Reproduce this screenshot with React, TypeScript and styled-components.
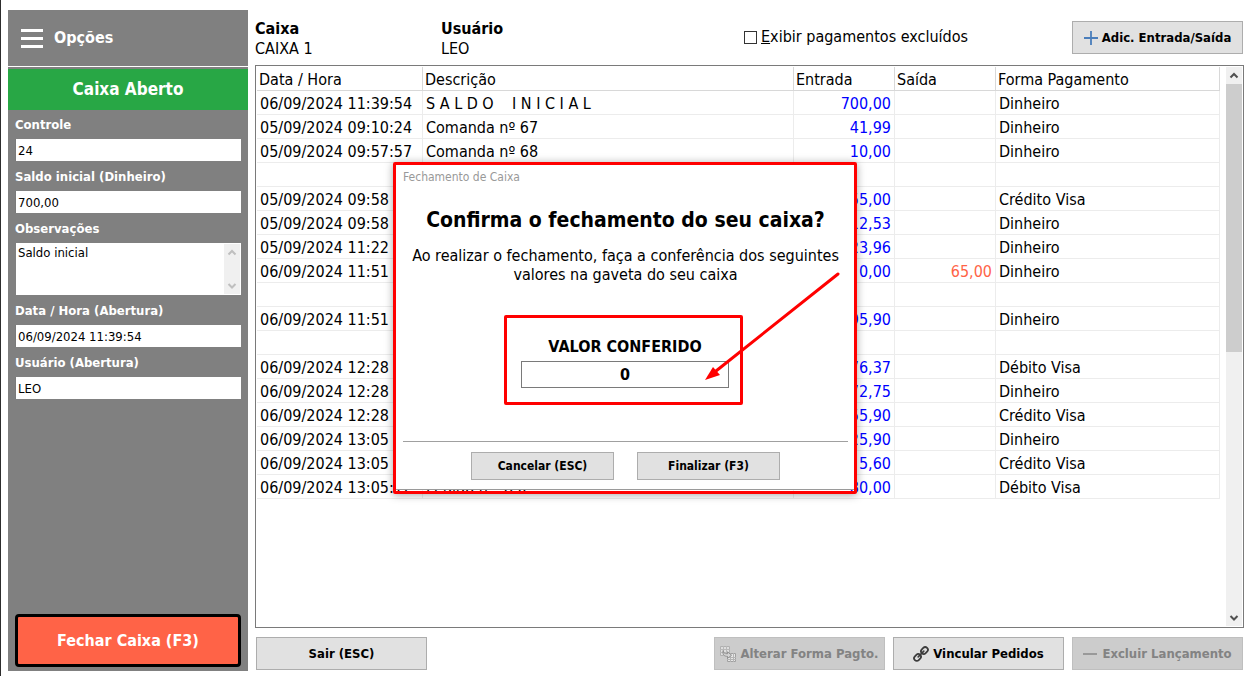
import React from "react";
import styled, { createGlobalStyle } from "styled-components";

const GlobalStyle = createGlobalStyle`
  *, *::before, *::after { box-sizing: border-box; }
  body {
    margin: 0;
    background: #fff;
    color: #000;
    font-family: "DejaVu Sans Condensed", "Noto Sans", sans-serif;
    font-size: 16px;
    line-height: 20px;
  }
  button, input, textarea { font: inherit; color: inherit; margin: 0; }
`;

const Window = styled.div`
  position: relative;
  display: flex;
  gap: 7px;
  min-height: 100vh;
  padding: 10px 5px 5px 7px;
  border-left: 1px solid #2d2d2d;
`;

/* ---------- sidebar ---------- */

const Sidebar = styled.aside`
  display: flex;
  flex-direction: column;
  flex: 0 0 240px;
  background: #808080;
  color: #fff;
`;

const MenuButton = styled.button`
  display: flex;
  align-items: center;
  gap: 11px;
  height: 57px;
  padding: 0 13px;
  border: 0;
  border-bottom: 1px solid #fff;
  background: none;
  font-size: 16px;
  font-weight: bold;
`;

const Status = styled.div`
  margin-top: 2px;
  padding: 10px 0;
  background: #28a745;
  font-size: 17px;
  font-weight: bold;
  line-height: 21px;
  text-align: center;
`;

const Fields = styled.div`
  display: flex;
  flex-direction: column;
  padding: 5px 7px 0;
`;

const Field = styled.label`
  display: flex;
  flex-direction: column;
  gap: 4px;
  margin-bottom: 6px;
  font-size: 13px;
  font-weight: bold;
  line-height: 20px;
`;

const TextInput = styled.input`
  height: 22px;
  width: 100%;
  padding: 0 2px;
  border: 0;
  border-left: 1px solid #7a7a7a;
  background: #fff;
  color: #000;
  font-size: 13px;
  font-weight: normal;
`;

const NoteBox = styled.span`
  display: flex;
  height: 52px;
  padding: 1px;
  margin-left: 1px;
  background: #fff;
`;

const NoteText = styled.textarea`
  flex: 1;
  min-width: 0;
  padding: 1px;
  border: 0;
  resize: none;
  overflow: hidden;
  color: #000;
  font-size: 13px;
  font-weight: normal;
  line-height: 16px;
`;

const CloseButton = styled.button`
  height: 53px;
  margin: auto 7px 4px;
  border: 3px solid #000;
  border-radius: 4px;
  background: #ff6347;
  font-size: 16px;
  font-weight: bold;
`;

/* ---------- scroll bars ---------- */

const Scroll = styled.span<{ $active?: boolean }>`
  display: flex;
  flex-direction: column;
  align-items: center;
  justify-content: space-between;
  flex: 0 0 16px;
  background: #f0f0f0;
  color: ${(p) => (p.$active ? "#505050" : "#bfbfbf")};
`;

const ScrollArrow = styled.svg`
  width: 16px;
  height: 17px;
  flex: none;
`;

const ScrollTrack = styled.span`
  flex: 1;
  align-self: stretch;
`;

const ScrollThumb = styled.span`
  display: block;
  height: 51%;
  background: #cdcdcd;
`;

/* ---------- main area ---------- */

const Main = styled.main`
  display: flex;
  flex-direction: column;
  flex: 1;
  min-width: 0;
`;

const TopBar = styled.header`
  display: flex;
  align-items: flex-start;
  height: 55px;
  padding-top: 9px;
`;

const Info = styled.div`
  flex: 0 0 186px;
`;

const InfoTitle = styled.div`
  font-weight: bold;
`;

const CheckLabel = styled.label`
  display: flex;
  align-items: center;
  gap: 4px;
  margin: 8px 104px 0 auto;
`;

const CheckBox = styled.input`
  appearance: none;
  width: 13px;
  height: 13px;
  border: 1px solid #333;
  background: #fff;
`;

const Button = styled.button`
  display: inline-flex;
  align-items: center;
  justify-content: center;
  gap: 4px;
  flex: none;
  width: 171px;
  height: 33px;
  padding: 0;
  border: 1px solid #adadad;
  background: #e1e1e1;
  font-size: 13px;
  font-weight: bold;
  line-height: 16px;
  white-space: nowrap;
  &:disabled {
    border-color: #bfbfbf;
    background: #ccc;
    color: #838383;
  }
`;

const DialogButton = styled(Button)`
  width: 143px;
  height: 28px;
  font-size: 12px;
`;

const TopButtonSlot = styled.div`
  display: flex;
  padding: 2px 1px 0 0;
`;

const Grid = styled.section`
  display: flex;
  flex: 1;
  align-items: stretch;
  padding: 1px;
  border: 1px solid #7a7a7a;
`;

const GridBody = styled.div`
  flex: 1;
  min-width: 0;
  margin-right: 6px;
`;

const Table = styled.table`
  width: 100%;
  table-layout: fixed;
  border-collapse: separate;
  border-spacing: 0;
`;

const Column = styled.col<{ $width: number }>`
  width: ${(p) => p.$width}px;
`;

const HeadCell = styled.th`
  height: 24px;
  padding: 2px 2px 0;
  border-right: 1px solid #d8d8d8;
  border-bottom: 1px solid #d8d8d8;
  font-weight: normal;
  text-align: left;
  white-space: nowrap;
`;

const Cell = styled.td<{ $tone?: "in" | "out" }>`
  height: 24px;
  padding: 2px 3px 0;
  border-right: 1px solid #ececec;
  border-bottom: 1px solid #ececec;
  overflow: hidden;
  white-space: pre;
  text-align: ${(p) => (p.$tone ? "right" : "left")};
  color: ${(p) => (p.$tone === "in" ? "#0000ff" : p.$tone === "out" ? "#ff6347" : "#000")};
`;

const Footer = styled.footer`
  display: flex;
  gap: 8px;
  padding: 9px 1px 1px;
`;

const Spacer = styled.span`
  flex: 1;
`;

/* ---------- dialog ---------- */

const Overlay = styled.div`
  position: absolute;
  inset: 0;
  display: flex;
  align-items: center;
  justify-content: center;
  padding-bottom: 20px;
`;

const DialogFrame = styled.div`
  position: relative;
  width: 464px;
  padding-bottom: 1px;
  border: 3px solid #ff0000;
  border-radius: 2px;
  box-shadow: 0 1px 9px rgba(0, 0, 0, 0.35);
`;

const DialogPanel = styled.div`
  display: flex;
  flex-direction: column;
  align-items: center;
  height: 325px;
  padding: 4px 6px 0 7px;
  border-bottom: 1px solid #9a9a9a;
  background: #fff;
`;

const DialogCaption = styled.div`
  align-self: flex-start;
  color: #999;
  font-size: 12px;
  line-height: 16px;
`;

const DialogTitle = styled.h1`
  margin: 21px 0 0;
  font-size: 21px;
  line-height: 28px;
  white-space: nowrap;
`;

const DialogText = styled.p`
  margin: 12px 0 0;
  line-height: 19px;
  text-align: center;
  white-space: nowrap;
`;

const ValueBox = styled.label`
  display: flex;
  flex-direction: column;
  align-items: center;
  gap: 4px;
  width: 239px;
  height: 90px;
  margin: 31px 4px 0 0;
  padding: 19px 11px 0 14px;
  border: 3px solid #ff0000;
  border-radius: 2px;
  font-weight: bold;
`;

const ValueInput = styled.input`
  width: 100%;
  height: 27px;
  border: 1px solid #7a7a7a;
  background: #fff;
  text-align: center;
`;

const DialogActions = styled.div`
  display: flex;
  align-self: stretch;
  justify-content: center;
  gap: 23px;
  margin-top: 36px;
  padding-top: 10px;
  border-top: 1px solid #a0a0a0;
`;

const Pointer = styled.svg`
  position: absolute;
  left: 306px;
  top: 106px;
  width: 140px;
  height: 112px;
  pointer-events: none;
`;

/* ---------- icons ---------- */

const Arrow = ({ down }: { down?: boolean }) => (
  <ScrollArrow viewBox="0 0 16 17" aria-hidden="true">
    <path
      d={down ? "M4.5 7 L8 10.5 L11.5 7" : "M4.5 10.5 L8 7 L11.5 10.5"}
      fill="none"
      stroke="currentColor"
      strokeWidth="2"
    />
  </ScrollArrow>
);

const MenuIcon = () => (
  <svg width="22" height="20" viewBox="0 0 22 20" fill="#fff" aria-hidden="true">
    <rect y="1" width="22" height="3" />
    <rect y="9" width="22" height="3" />
    <rect y="17" width="22" height="3" />
  </svg>
);

const PlusIcon = () => (
  <svg width="14" height="16" viewBox="0 0 14 16" aria-hidden="true">
    <path d="M7 1V15M0 8H14" stroke="#4a7ebb" strokeWidth="1.8" />
  </svg>
);

const MinusIcon = () => (
  <svg width="15" height="16" viewBox="0 0 15 16" aria-hidden="true">
    <path d="M0 8H14" stroke="#999" strokeWidth="2" />
  </svg>
);

const LinkIcon = () => (
  <svg width="16" height="16" viewBox="0 0 16 16" fill="none" stroke="#3c3c3c" aria-hidden="true">
    <g transform="rotate(-45 8 8)">
      <rect x="-0.6" y="5.3" width="7.4" height="5.4" rx="2.7" strokeWidth="1.8" />
      <rect x="9.2" y="5.3" width="7.4" height="5.4" rx="2.7" strokeWidth="1.8" />
      <path d="M4 8H12" strokeWidth="1.6" strokeLinecap="round" />
    </g>
  </svg>
);

const ConvertIcon = () => (
  <svg width="16" height="16" viewBox="0 0 16 16" aria-hidden="true">
    <path d="M.5 .5H9.5V9.5H.5Z" fill="#dedede" stroke="#b0b0b0" />
    <path d="M0 3.5H10M0 6.5H10M3.5 0V10M6.5 0V10" stroke="#b8b8b8" />
    <path d="M7.5 7.5H15.5V15.5H7.5Z" fill="#e6e6e6" stroke="#a0a0a0" />
    <path d="M7 11.5H16M7 13.5H16M10.5 7V16M13.5 7V16" stroke="#b4b4b4" />
    <path
      d="M3.2 4.5C3.2 7 4.5 7.8 7.5 7.8V5.8L11.6 9.2L7.5 12.4V10.4C4 10.4 2.2 8.4 3.2 4.5Z"
      fill="#d4d4d4"
      stroke="#8c8c8c"
      strokeWidth="0.9"
    />
  </svg>
);

/* ---------- data ---------- */

type Entry = [date: string, description: string, credit: string, debit: string, method: string];

const entries: Entry[] = [
  ["06/09/2024 11:39:54", "S A L D O    I N I C I A L", "700,00", "", "Dinheiro"],
  ["05/09/2024 09:10:24", "Comanda nº 67", "41,99", "", "Dinheiro"],
  ["05/09/2024 09:57:57", "Comanda nº 68", "10,00", "", "Dinheiro"],
  ["", "", "", "", ""],
  ["05/09/2024 09:58", "", "55,00", "", "Crédito Visa"],
  ["05/09/2024 09:58", "", "12,53", "", "Dinheiro"],
  ["05/09/2024 11:22", "", "23,96", "", "Dinheiro"],
  ["06/09/2024 11:51", "", "0,00", "65,00", "Dinheiro"],
  ["", "", "", "", ""],
  ["06/09/2024 11:51", "", "95,90", "", "Dinheiro"],
  ["", "", "", "", ""],
  ["06/09/2024 12:28", "", "76,37", "", "Débito Visa"],
  ["06/09/2024 12:28", "", "72,75", "", "Dinheiro"],
  ["06/09/2024 12:28", "", "55,90", "", "Crédito Visa"],
  ["06/09/2024 13:05", "", "25,90", "", "Dinheiro"],
  ["06/09/2024 13:05", "", "5,60", "", "Crédito Visa"],
  ["06/09/2024 13:05:12", "Pedido nº 920", "80,00", "", "Débito Visa"],
];

export default function App() {
  return (
    <>
      <GlobalStyle />
      <Window>
        <Sidebar>
          <MenuButton>
            <MenuIcon />
            Opções
          </MenuButton>
          <Status>Caixa Aberto</Status>
          <Fields>
            <Field>
              Controle
              <TextInput defaultValue="24" />
            </Field>
            <Field>
              Saldo inicial (Dinheiro)
              <TextInput defaultValue="700,00" />
            </Field>
            <Field>
              Observações
              <NoteBox>
                <NoteText defaultValue="Saldo inicial" />
                <Scroll>
                  <Arrow />
                  <Arrow down />
                </Scroll>
              </NoteBox>
            </Field>
            <Field>
              Data / Hora (Abertura)
              <TextInput defaultValue="06/09/2024 11:39:54" />
            </Field>
            <Field>
              Usuário (Abertura)
              <TextInput defaultValue="LEO" />
            </Field>
          </Fields>
          <CloseButton>Fechar Caixa (F3)</CloseButton>
        </Sidebar>

        <Main>
          <TopBar>
            <Info>
              <InfoTitle>Caixa</InfoTitle>
              CAIXA 1
            </Info>
            <Info>
              <InfoTitle>Usuário</InfoTitle>
              LEO
            </Info>
            <CheckLabel>
              <CheckBox type="checkbox" />
              <span>
                <u>E</u>xibir pagamentos excluídos
              </span>
            </CheckLabel>
            <TopButtonSlot>
              <Button>
                <PlusIcon />
                Adic. Entrada/Saída
              </Button>
            </TopButtonSlot>
          </TopBar>

          <Grid>
            <GridBody>
              <Table>
                <colgroup>
                  <Column $width={166} />
                  <col />
                  <Column $width={101} />
                  <Column $width={101} />
                  <Column $width={224} />
                </colgroup>
                <thead>
                  <tr>
                    <HeadCell>Data / Hora</HeadCell>
                    <HeadCell>Descrição</HeadCell>
                    <HeadCell>Entrada</HeadCell>
                    <HeadCell>Saída</HeadCell>
                    <HeadCell>Forma Pagamento</HeadCell>
                  </tr>
                </thead>
                <tbody>
                  {entries.map(([date, description, credit, debit, method], i) => (
                    <tr key={i}>
                      <Cell>{date}</Cell>
                      <Cell>{description}</Cell>
                      <Cell $tone="in">{credit}</Cell>
                      <Cell $tone="out">{debit}</Cell>
                      <Cell>{method}</Cell>
                    </tr>
                  ))}
                </tbody>
              </Table>
            </GridBody>
            <Scroll $active>
              <Arrow />
              <ScrollTrack>
                <ScrollThumb />
              </ScrollTrack>
              <Arrow down />
            </Scroll>
          </Grid>

          <Footer>
            <Button>Sair (ESC)</Button>
            <Spacer />
            <Button disabled>
              <ConvertIcon />
              Alterar Forma Pagto.
            </Button>
            <Button>
              <LinkIcon />
              Vincular Pedidos
            </Button>
            <Button disabled>
              <MinusIcon />
              Excluir Lançamento
            </Button>
          </Footer>
        </Main>

        <Overlay>
          <DialogFrame role="dialog" aria-label="Fechamento de Caixa">
            <DialogPanel>
              <DialogCaption>Fechamento de Caixa</DialogCaption>
              <DialogTitle>Confirma o fechamento do seu caixa?</DialogTitle>
              <DialogText>
                Ao realizar o fechamento, faça a conferência dos seguintes
                <br />
                valores na gaveta do seu caixa
              </DialogText>
              <ValueBox>
                VALOR CONFERIDO
                <ValueInput defaultValue="0" />
              </ValueBox>
              <DialogActions>
                <DialogButton>Cancelar (ESC)</DialogButton>
                <DialogButton>Finalizar (F3)</DialogButton>
              </DialogActions>
            </DialogPanel>
            <Pointer viewBox="0 0 140 112" aria-hidden="true">
              <path d="M136 3 L14 100" stroke="#ff0000" strokeWidth="3" strokeLinecap="round" />
              <path d="M3 109 L11 96 L18 104 Z" fill="#ff0000" />
            </Pointer>
          </DialogFrame>
        </Overlay>
      </Window>
    </>
  );
}
